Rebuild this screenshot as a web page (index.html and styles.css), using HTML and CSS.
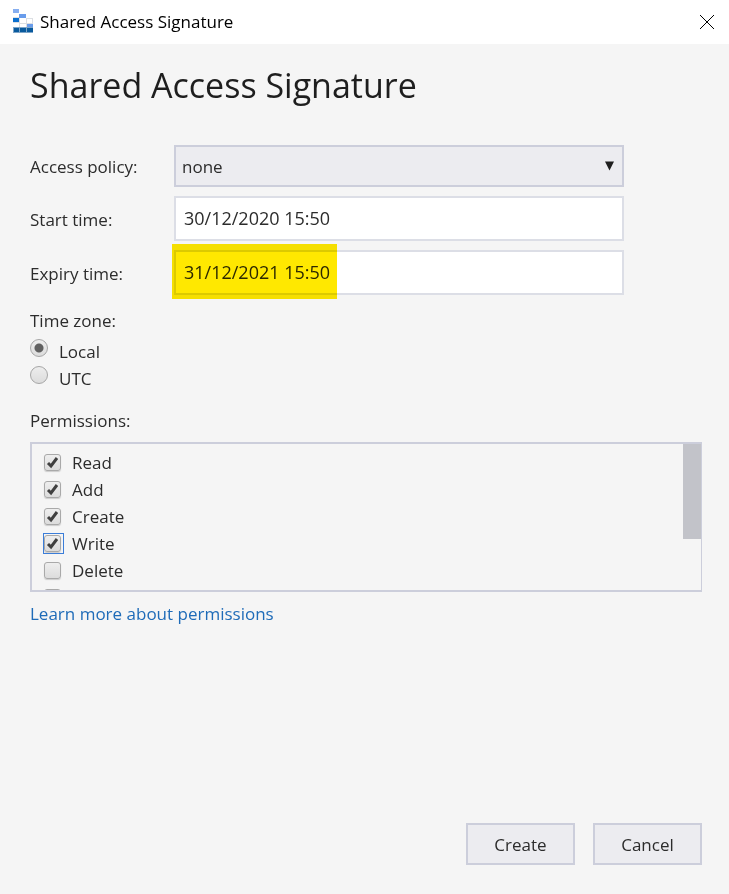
FILE: index.html
```html
<!DOCTYPE html>
<html lang="en">
<head>
<meta charset="utf-8">
<title>Shared Access Signature</title>
<link rel="stylesheet" href="styles.css">
</head>
<body>
<header class="titlebar">
  <svg class="app-icon" viewBox="0 0 21 24" aria-hidden="true">
    <path fill="#bfc5cc" d="M0 8h7v1h13v9H0z" opacity=".55"/>
    <path fill="#86aef0" d="M0 0h6v4H0z"/>
    <path fill="#699ceb" d="M6 5h7v4H6zM14 15h6v4h-6z"/>
    <path fill="#0b6fce" d="M0 9h6v4H0z"/>
    <path fill="#fff" d="M7 9h6v5H7zM14 10h5v4h-5zM0 14h6v4H0zM7 15h6v3H7z"/>
    <path fill="#7da5c9" d="M0 18h20v6H0z"/>
    <path fill="#095a9d" d="M1 19h5v4H1zM7 19h6v4H7zM14 19h6v4h-6z"/>
  </svg>
  <span class="titlebar-text">Shared Access Signature</span>
  <button class="close" type="button" aria-label="Close">
    <svg viewBox="0 0 16 16" aria-hidden="true"><path d="M1 1l14 14M15 1L1 15"/></svg>
  </button>
</header>
<form class="dialog">
  <h1>Shared Access Signature</h1>
  <div class="fields">
    <label for="policy">Access policy:</label>
    <div class="select-wrap">
      <select id="policy"><option>none</option></select>
      <svg class="arrow" viewBox="0 0 10 10" aria-hidden="true"><path d="M0 0h10L5 10z"/></svg>
    </div>
    <label for="start">Start time:</label>
    <input id="start" type="text" value="30/12/2020 15:50">
    <label for="expiry">Expiry time:</label>
    <div class="marked">
      <input id="expiry" type="text" value="31/12/2021 15:50">
      <span class="marker"></span>
    </div>
  </div>
  <fieldset class="zone">
    <legend>Time zone:</legend>
    <label class="radio"><input type="radio" name="zone" checked><span>Local</span></label>
    <label class="radio"><input type="radio" name="zone"><span>UTC</span></label>
  </fieldset>
  <fieldset class="permissions">
    <legend>Permissions:</legend>
    <div class="list">
      <div class="items">
        <label class="check"><input type="checkbox" checked>Read</label>
        <label class="check"><input type="checkbox" checked>Add</label>
        <label class="check"><input type="checkbox" checked>Create</label>
        <label class="check"><input class="focused" type="checkbox" checked>Write</label>
        <label class="check"><input type="checkbox">Delete</label>
        <label class="check"><input type="checkbox">List</label>
      </div>
      <div class="track"><div class="thumb"></div></div>
    </div>
  </fieldset>
  <a class="learn" href="#">Learn more about permissions</a>
  <div class="actions">
    <button type="button">Create</button>
    <button type="button">Cancel</button>
  </div>
</form>
</body>
</html>
```
FILE: styles.css
```css
* { box-sizing: border-box; }

body {
  margin: 0;
  min-height: 100vh;
  display: flex;
  flex-direction: column;
  background: #f5f5f5;
  color: #2c2c2c;
  font: 400 17px/24px "Open Sans", "Noto Sans", sans-serif;
}

input, select, button { font: inherit; color: inherit; }

.titlebar {
  display: flex;
  align-items: center;
  height: 44px;
  padding: 0 14px 0 13px;
  background: #fff;
  color: #000;
}
.app-icon { width: 21px; height: 24px; margin: 0 6px 2px 0; }
.titlebar-text { flex: 1; }
.close { display: flex; padding: 0; border: 0; background: none; }
.close svg { width: 16px; height: 16px; fill: none; stroke: #000; stroke-width: 1; }

.dialog {
  flex: 1;
  display: flex;
  flex-direction: column;
  padding: 17px 27px 29px 30px;
}

h1 {
  margin: 0 0 36px;
  font-size: 34px;
  line-height: 48px;
  font-weight: 400;
  color: #1e1e1e;
}

.fields {
  display: grid;
  grid-template-columns: 144px 1fr;
  row-gap: 9px;
  align-items: center;
  margin-right: 78px;
}
.fields label { padding-top: 2px; }
.select-wrap, .marked { position: relative; display: flex; }
select {
  appearance: none;
  width: 100%;
  height: 42px;
  padding: 1px 6px 0;
  border: 2px solid #cccedb;
  border-radius: 0;
  background: #ececf0;
}
.arrow { position: absolute; right: 10px; top: 16px; width: 9px; height: 10px; fill: #1e1e1e; }
.fields input {
  width: 100%;
  height: 45px;
  padding: 0 8px 1px;
  border: 2px solid #dcdee6;
  background: #fff;
  font-size: 18px;
}
.marker {
  position: absolute;
  left: -2px;
  top: -6px;
  width: 165px;
  height: 55px;
  background: #ffe800;
  mix-blend-mode: multiply;
}

fieldset { margin: 0; padding: 0; border: 0; min-width: 0; }
legend { padding: 0; }

.zone { margin-top: 14px; }
.radio { display: flex; height: 27px; }
.radio input {
  appearance: none;
  flex: none;
  width: 18px;
  height: 18px;
  margin: 6px 11px 0 0;
  border: 1px solid #a6a6a6;
  border-radius: 50%;
  background: linear-gradient(#ededed, #dcdcdc);
}
.radio input:checked {
  background: radial-gradient(circle, #606060 4px, transparent 5px), linear-gradient(#ededed, #dcdcdc);
}
.radio span { margin-top: 7px; }

.permissions { margin-top: 22px; }
.list {
  display: flex;
  height: 150px;
  margin-top: 9px;
  border: 2px solid #cccedb;
  border-right-width: 1px;
  overflow: hidden;
}
.items { flex: 1; padding: 5px 12px; }
.check { display: flex; align-items: center; height: 27px; }
.check input {
  appearance: none;
  position: relative;
  flex: none;
  width: 17px;
  height: 17px;
  margin: 0 11px 0 0;
  border: 1px solid #a9a9a9;
  border-radius: 3px;
  background: linear-gradient(#eee, #dcdcdc);
  box-shadow: 0 1px 1px #ccc;
}
.check input:checked {
  background: url("data:image/svg+xml,%3Csvg xmlns='http://www.w3.org/2000/svg' viewBox='0 0 15 15'%3E%3Cpath d='M3 8l3 3 6-8' fill='none' stroke='%23404040' stroke-width='3'/%3E%3C/svg%3E"), linear-gradient(#eee, #dcdcdc);
}
.check .focused::after {
  content: "";
  position: absolute;
  inset: -3px -4px -3px -2px;
  border: 1px solid #3b7dd8;
}
.track { width: 18px; }
.thumb { height: 96px; margin-top: -1px; background: #c2c3c9; }

.learn {
  align-self: flex-start;
  margin-top: 10px;
  color: #1e6bb8;
  text-decoration: none;
}

.actions {
  display: flex;
  justify-content: flex-end;
  gap: 18px;
  margin-top: auto;
}
.actions button {
  width: 109px;
  height: 42px;
  padding: 2px 0 0;
  border: 2px solid #cccedb;
  background: #ececf0;
}
```
